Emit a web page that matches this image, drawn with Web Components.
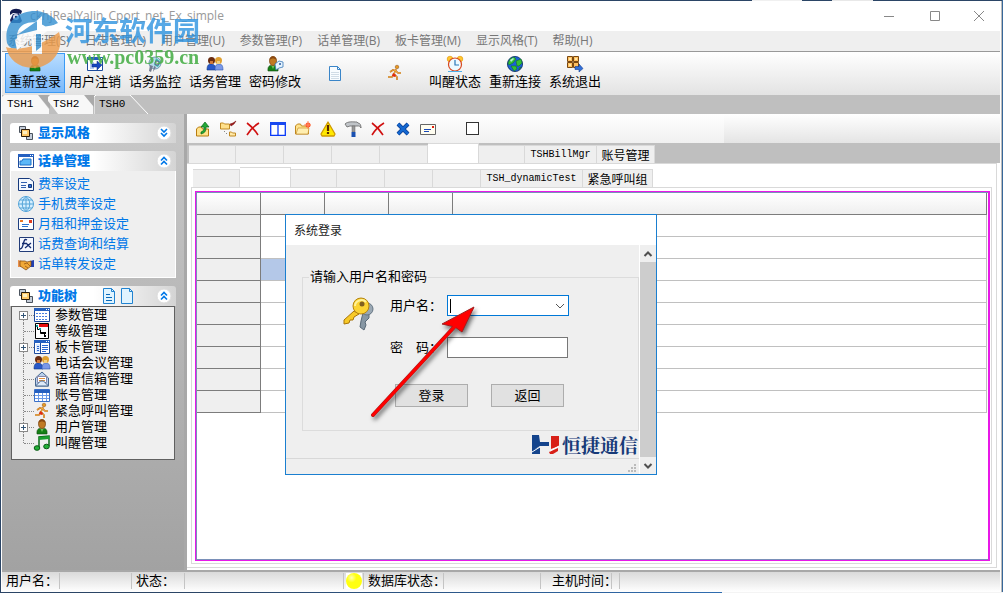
<!DOCTYPE html>
<html lang="zh-CN">
<head>
<meta charset="utf-8">
<title>ckhjRealYaJin_Cport_net_Ex_simple</title>
<style>
html, body { margin: 0; height: 100%; }
body { font: 13px/16px "Liberation Sans", "Noto Sans CJK SC", sans-serif; color: #000; background: #2b4566; overflow: hidden; }
</style>
</head>
<body>
<app-window></app-window>
<script>
const BASE = `*{box-sizing:border-box}
button{font:inherit;color:inherit;margin:0;padding:0;border:0;background:none;text-align:inherit;white-space:nowrap}
a{color:inherit;text-decoration:none}ul{list-style:none;margin:0;padding:0}`;

function define(name, css, html, setup) {
  const template = document.createElement('template');
  template.innerHTML = `<style>${BASE}${css}</style>${html}`;
  customElements.define(name, class extends HTMLElement {
    connectedCallback() {
      if (this.shadowRoot) return;
      this.attachShadow({ mode: 'open' }).append(template.content.cloneNode(true));
      if (setup) setup(this, this.shadowRoot);
    }
  });
}

const person = (c, x = 0) => `<g transform="translate(${x} 0)"><path d="M3 15c-.5-4 1-6 5-6s5.500 2 5 6z" fill="${c}" stroke="#134a10" stroke-width=".6"/><path d="M6 9l2 4 2-4z" fill="#6fc060"/><path d="M4.500 5c0-6 7-6 7 0 0 6-7 6-7 0z" fill="#c07a24" stroke="#7a4210" stroke-width=".7"/><path d="M4.500 4c0-5 7-5 7 0-2-2-5-2-7 0z" fill="#8a4a12"/></g>`;
const duo = `<path d="M0 14c0-4 1-6 4-6s5 2 5 6z" fill="#2858c8" stroke="#123a80" stroke-width=".6"/><circle cx="4.500" cy="4.500" r="3.500" fill="#6a2c10"/><path d="M3 5h3v3H3z" fill="#d07a3a"/><path d="M8 14c0-4 1-6 4-6s4 2 4 6z" fill="#7a98e8" stroke="#2b55b0" stroke-width=".6"/><circle cx="11.500" cy="4.500" r="3.500" fill="#e0a030"/><path d="M10 5h3v3h-3z" fill="#f0cf80"/>`;
const runner = `<circle cx="10" cy="2" r="1.800" fill="#e89a20" stroke="#8a4a10" stroke-width=".5"/><path d="M9 4L7 9l3 3v3M7 9l-2 3H1M3 7l3-2 3 1 2 2h3" fill="none" stroke="#b86410" stroke-width="1.600"/><path d="M9 4L7 9l3 3v3M7 9l-2 3H1M3 7l3-2 3 1 2 2h3" fill="none" stroke="#ffc04a" stroke-width=".7"/><path d="M6 8l3 2-1 2-3-1z" fill="#e02a10"/>`;
const frame = `<path d="M.5 1.500h15v13H.5z" fill="#fff" stroke="#1c4a9c"/><path d="M0 1h16v3H0z" fill="#2560c0"/><path d="M12 2h1v1h-1zm2 0h1v1h-1z" fill="#fff"/>`;
const cross = (c, w) => `<path d="M3 3l10 10M13 3L3 13" stroke="${c}" stroke-width="${w}" fill="none"/>`;
const ICONS = {
  phone: `<path d="M2 4C4 0 11 0 14 3l-1 3-3-1-5 0-3 2z" fill="#141c50"/><path d="M5 6l6-1 3 8-2 2H3L2 12z" fill="#1d2a66"/><circle cx="8" cy="9" r="3" fill="#d8def0"/><circle cx="8" cy="9" r="1.200" fill="#1d2a66"/>`,
  user: person('#158015'),
  logout: `${frame}<path d="M3 6h4v7H3z" fill="#b8ccf4"/><path d="M5 8h5V5l5 4-5 5v-3H5z" fill="#1747c0" stroke="#0a2a80" stroke-width=".5"/>`,
  monitor: `<circle cx="8" cy="7" r="6" fill="#b9dced" stroke="#7298b0"/><path d="M9 2l5 4-3 5-4-2z" fill="#40b5b0"/><circle cx="10" cy="7" r="2" fill="#f5fbff" stroke="#557"/><path d="M3 9l3 1-2 6-2-1zM7 10l2 1-3 5z" fill="#747c90"/>`,
  duo,
  pass: person('#158015', -2) + `<path d="M8 8l4-3 4 1v5l-4 1-3 2z" fill="#e5f4ff" stroke="#3a78b8" stroke-width=".8"/><circle cx="13" cy="8" r="1" fill="#29569a"/>`,
  page: `<path d="M2.500 1.500h8l3 3v11h-11z" fill="#f8fcff" stroke="#3a85c8"/><path d="M10.500 1.500v3h3" fill="none" stroke="#3a85c8"/><path d="M4 7.500h8M4 9.500h8M4 11.500h8M4 13.500h8" stroke="#d0dce6"/>`,
  pagelines: `<path d="M2.500.5h8l3 3v12h-11z" fill="#e0f4ff" stroke="#2183d0"/><path d="M10.500.5v3h3" fill="none" stroke="#2183d0"/><path d="M5 6.500h4M5 9.500h6M5 12.500h6" stroke="#0868b8"/>`,
  blank: `<path d="M2.500.5h8l3 3v12h-11z" fill="#e0f4ff" stroke="#2183d0"/><path d="M10.500.5v3h3" fill="none" stroke="#2183d0"/>`,
  runner,
  clock: `<circle cx="3" cy="3" r="2.800" fill="#ffc830" stroke="#e09000" stroke-width=".6"/><circle cx="13" cy="3" r="2.800" fill="#ffc830" stroke="#e09000" stroke-width=".6"/><circle cx="8" cy="8.500" r="6.500" fill="#eefaff" stroke="#d84820" stroke-width="1.200"/><path d="M8 4v5h4" fill="none" stroke="#2878b8" stroke-width="1.200"/><path d="M1 15.500h14" stroke="#50b0e8"/>`,
  globe: `<circle cx="8" cy="8" r="7.600" fill="#1c60d8" stroke="#082a60" stroke-width=".8"/><path d="M3 3l4-2 2 2-3 4-4 2-1-2zM9 5l5-2 1 4-3 3-2 0zM4 10l5 0 1 3-3 2zM12 12l2-1-2 3z" fill="#35c035" stroke="#0a6818" stroke-width=".5"/><path d="M3 4l3-2 1 1-3 3z" fill="#b0f0d0"/>`,
  exit: `<path d="M.5.5h5v5h-5zM6.500.5h5v5h-5zM.5 6.500h5v5h-5zM6.500 6.500h5v5h-5z" fill="#ffc060" stroke="#7a4810"/><path d="M2 2h2v2H2zM8 2h2v2H8zM2 8h2v2H2z" fill="#ffe8a8"/><path d="M8 10.500h4V8l4 4.500-4 3.500v-2.500H8z" fill="#3270d8" stroke="#123c90" stroke-width=".6"/>`,
  stack: `<path d="M1.500 1.500h6v6h-6z" fill="#c4ccd8" stroke="#4b535e"/><path d="M8.500 8.500h6v6h-6z" fill="#c4ccd8" stroke="#4b535e"/><path d="M3.500 4.500h8v7h-8z" fill="#ffc868" stroke="#2a1a08"/><path d="M5 6h4v3H5z" fill="#fff0c0"/>`,
  win: `${frame}<path d="M2 12V8h2l1-2h8v6z" fill="#5cb8f8" stroke="#1c70c8"/>`,
  rate: `<path d="M.5 2.500h11l4 3v9H.5z" fill="#f4f9ff" stroke="#16397c"/><path d="M3 6.500h6M3 9.500h5M3 11.500h5" stroke="#3060b0"/><path d="M10.500 8.500h3v3h-3z" fill="#2a70d8" stroke="#16397c"/>`,
  web: `<circle cx="8" cy="8" r="7.500" fill="#d6efff" stroke="#54a4d8"/><path d="M8 .5v15M.5 8h15M2 4h12M2 12h12M8 .5c-5 4-5 11 0 15M8 .5c5 4 5 11 0 15" fill="none" stroke="#54a4d8"/>`,
  card: `<path d="M.5 2.500h15v11H.5z" fill="#fff" stroke="#1e3f80"/><path d="M2 4h3v2H2z" fill="#e87828"/><path d="M11 4h3v3h-3z" fill="#e03c20"/><path d="M4 8.500h7M4 10.500h6" stroke="#2b75d0"/>`,
  fx: `<path d="M1.500 1.500h14v14h-14z" fill="#f4f7ff" stroke="#223c78"/><path d="M9 4c-3-2-3 2-4 5s-1 4-3 4M4 7.500h4M8 7l5 5M13 7l-6 5" fill="none" stroke="#142c70" stroke-width="1.300"/>`,
  hands: `<path d="M0 4l4 1v6l-4 0z" fill="#e8904a"/><path d="M16 4l-4 1v6l4 0z" fill="#2140b0"/><path d="M2 5l5 0 2 1 4-1v5l-5 4-6-4z" fill="#f0a838" stroke="#7a4210" stroke-width=".7"/><path d="M6 8l3-1 3 3M7 10l3 2" fill="none" stroke="#8a4a10" stroke-width=".7"/>`,
  cal: `${frame}<path d="M2 6.500h12M2 9.500h12M2 12.500h12" stroke="#4a7fe0" stroke-dasharray="2 1"/>`,
  chart: `<path d="M1.500.5h13v15h-13z" fill="#fff" stroke="#000"/><path d="M5 1h9v3H5z" fill="#e81010"/><path d="M3.500 3v3.500h3v4h4v3M6.500 9.500h4" fill="none" stroke="#000"/><path d="M2 2h2v2H2zM5 5h2v2H5z" fill="#10a0a0"/><path d="M10 9h2v2h-2zM10 12h2v2h-2z" fill="#000"/>`,
  board: `${frame}<path d="M2 5h4v8H2z" fill="#d9e8ff"/><path d="M6.500 4v10" stroke="#1c4a9c"/><path d="M8 6.500h6M8 8.500h6M8 10.500h6M8 12.500h4M3 7.500h2M3 9.500h2M3 11.500h2" stroke="#2a66d0"/>`,
  mail: `<path d="M1.500 7l6.500-6 6.500 6v8h-13z" fill="#b9d0ec" stroke="#486890"/><path d="M3.500 5.500h9v6h-9z" fill="#fff" stroke="#88a"/><path d="M5 7.500h6M5 9.500h6" stroke="#e09040"/><path d="M1.500 15l5-5h3l5 5z" fill="#dce9f8" stroke="#486890"/>`,
  table: `<path d="M.5 2.500h15v12H.5z" fill="#fff" stroke="#3a70c8"/><path d="M1 3h15v3H1z" fill="#2560c0"/><path d="M4.500 6v8M8.500 6v8M12.500 6v8M1 8.500h14M1 11.500h14" stroke="#6a9ae8"/>`,
  music: `<path d="M5 13V2l10-1v10" fill="none" stroke="#0a6a18" stroke-width="1.500"/><path d="M5 2l10-1v3L5 5z" fill="#1ca030"/><ellipse cx="3" cy="13" rx="2.800" ry="2.300" fill="#22b038" stroke="#0a5a14"/><ellipse cx="12.500" cy="11.500" rx="2.800" ry="2.300" fill="#22b038" stroke="#0a5a14"/>`,
  up: `<path d="M1.500 15V8l2-2h3l1 2h6v7z" fill="#ffe28a" stroke="#b87c10"/><path d="M6 11c3-1 3-3 3-5H6l4-5 4 5h-3c0 4-1 6-5 7z" fill="#22a838" stroke="#0a6818" stroke-width=".7"/>`,
  move: `<path d="M.5 8V2h3l1 1h5v5z" fill="#ffe08a" stroke="#c08820"/><path d="M10 3l3-1 3-2-2 3-3 2z" fill="#a01818" stroke="#700808" stroke-width=".5"/><path d="M9.500 15v-4h2l1 1h3v3z" fill="#ffe9a8" stroke="#c08820"/><path d="M4 10h1v1H4zM6 12h1v1H6z" fill="#888"/>`,
  del: `<path d="M2 2c4 3 8 7 11 12M14 2C9 5 5 9 2 14" fill="none" stroke="#d01010" stroke-width="1.600"/>`,
  cols: `<path d="M.7 1.700h14.600v12.600H.7zM8 3v11" fill="#fff" stroke="#0838f8" stroke-width="1.300"/><path d="M0 1h16v3H0z" fill="#1848f0"/>`,
  newfolder: `<path d="M.5 13V5l2-2h3l1 2h7v8z" fill="#ffe38c" stroke="#c08820"/><path d="M1 13l2-6h11l-1 6z" fill="#ffeeb0" stroke="#c08820" stroke-width=".6"/><circle cx="13" cy="4" r="2.500" fill="#ff5028"/><path d="M13 0v8M9 4h7" stroke="#ff8a60"/>`,
  warn: `<path d="M8 1l7 12-1 2H2l-1-2z" fill="#ffe800" stroke="#d09a00" stroke-width="1.300" stroke-linejoin="round"/><path d="M8 4v6M8 11v2" stroke="#5a2800" stroke-width="2.200"/>`,
  hammer: `<path d="M0 3c3-3 8-2 12-2l1 1c2 0 3 2 3 5-1-2-2-2-3-2H5L2 6z" fill="#c0c4c8" stroke="#666" stroke-width=".8"/><path d="M7 5h3v6H7z" fill="#999" stroke="#666" stroke-width=".5"/><path d="M6.500 11h4v5h-4z" fill="#1a50b0"/>`,
  bluex: cross('#0a3c90', 4) + cross('#1468d0', 2.5),
  letter: `<path d="M.5 3.500h15v10H.5z" fill="#fffdf0" stroke="#666"/><path d="M12 5h2v2h-2z" fill="#e02010"/><path d="M4 8.500h7M4 10.500h5" stroke="#1848b8"/>`,
  down2: `<circle cx="8" cy="8" r="7" fill="#fff" stroke="#ddd"/><path d="M5 4l3 3 3-3M5 8l3 3 3-3" fill="none" stroke="#0078e8" stroke-width="1.600"/>`,
  up2: `<circle cx="8" cy="8" r="7" fill="#fff" stroke="#ddd"/><path d="M5 7.500l3-3 3 3M5 11.500l3-3 3 3" fill="none" stroke="#0078e8" stroke-width="1.600"/>`,
  ball: `<defs><radialGradient id="g" cx=".35" cy=".3"><stop offset="0" stop-color="#ffffb0"/><stop offset=".6" stop-color="#ffff10"/></radialGradient></defs><path d="M0 0h16v16H0z" fill="#fff"/><circle cx="8" cy="8" r="8" fill="url(#g)"/>`,
  min: `<path d="M3 8.500h10" stroke="#888"/>`,
  max: `<path d="M3.500 3.500h9v9h-9z" fill="none" stroke="#888"/>`,
  close: `<path d="M3 3l10 10M13 3L3 13" stroke="#888"/>`,
  caretup: `<path d="M4.500 10L8 6.500l3.500 3.500" fill="none" stroke="#505050" stroke-width="2"/>`,
  caretdown: `<path d="M4.500 6L8 9.500 11.500 6" fill="none" stroke="#505050" stroke-width="2"/>`,
  chevron: `<path d="M4 6l4 4 4-4" fill="none" stroke="#555"/>`,
  grip: `<path d="M11 5h2v2h-2zM8 8h2v2H8zM11 8h2v2h-2zM5 11h2v2H5zM8 11h2v2H8zM11 11h2v2h-2z" fill="#bbb"/>`
};

define('ui-icon', `:host{display:block;flex:none;width:16px;height:16px}svg{display:block;width:100%;height:100%;overflow:visible}`,
  `<svg viewBox="0 0 16 16" aria-hidden="true"></svg>`,
  (el, root) => { root.querySelector('svg').innerHTML = ICONS[el.getAttribute('name')] || ''; });

define('title-bar', `:host{display:flex;align-items:center;height:30px;background:#fff;color:#999;font:12px/16px "Open Sans",sans-serif}
ui-icon{margin:0 6px}.name{flex:1}button{width:46px;height:30px;display:grid;place-items:center}button:last-child{width:42px}button ui-icon{margin:0}`,
  `<ui-icon name="phone"></ui-icon><span class="name">ckhjRealYaJin_Cport_net_Ex_simple</span>
  <button aria-label="最小化"><ui-icon name="min"></ui-icon></button><button aria-label="最大化"><ui-icon name="max"></ui-icon></button><button aria-label="关闭"><ui-icon name="close"></ui-icon></button>`);

define('menu-bar', `:host{display:flex;height:21px;padding-left:6px;gap:15px;background:#efefef;border-bottom:1px solid #999;color:#777;font:12px/20px "Open Sans","Noto Sans CJK SC",sans-serif}`,
  ['系统管理(S)','日志管理(L)','用户管理(U)','参数管理(P)','话单管理(B)','板卡管理(M)','显示风格(T)','帮助(H)'].map(t => `<button>${t}</button>`).join(''));

define('tool-button', `:host{display:block;width:60px}button{width:100%;height:40px;display:flex;flex-direction:column;align-items:center;justify-content:center;gap:2px;border:1px solid transparent}
:host([active]) button{background:linear-gradient(#b8dcff,#7ab9fa);border-color:#3a9af5}`,
  `<button><slot name="icon"></slot><slot></slot></button>`,
  (el, root) => {
    const icon = document.createElement('ui-icon');
    icon.slot = 'icon';
    icon.setAttribute('name', el.getAttribute('icon'));
    el.append(icon);
    if (el.title) root.querySelector('button').setAttribute('aria-label', el.title);
  });

define('tool-bar', `:host{display:flex;height:43px;padding:1px 3px;background:linear-gradient(#fff,#e3e3e3)}`,
  `<tool-button icon="user" active>重新登录</tool-button><tool-button icon="logout">用户注销</tool-button><tool-button icon="monitor">话务监控</tool-button><tool-button icon="duo">话务管理</tool-button><tool-button icon="pass">密码修改</tool-button><tool-button icon="page" title="新建"></tool-button><tool-button icon="runner" title="紧急"></tool-button><tool-button icon="clock">叫醒状态</tool-button><tool-button icon="globe">重新连接</tool-button><tool-button icon="exit">系统退出</tool-button>`);

define('document-tabs', `:host{display:flex;height:19px;background:#bfbfbf;font:11px/19px "Liberation Mono",monospace}
button{position:relative;width:46px;padding-left:5px}svg{position:absolute;left:0;top:0}span{position:relative}`,
  `<button><svg width="48" height="19"><path d="M36 0h12v14z" fill="#aaa"/><path d="M0 19V2l2-2h34l11 14v5z" fill="#f8f8f8"/></svg><span>TSH1</span></button>
   <button><svg width="48" height="19"><path d="M36 0h10v12z" fill="#aaa"/><path d="M0 6V2l2-2h34l9 11v8H10z" fill="#f8f8f8"/></svg><span>TSH2</span></button>
   <button><svg width="56" height="19"><path d="M0 19V2l2-2h34l18 19" fill="#c0c0c0" stroke="#fff"/></svg><span>TSH0</span></button>`);

define('side-panel', `:host{display:block}header{display:flex;align-items:center;height:20px;padding:0 4px 0 8px;border-radius:3px 3px 0 0;background:linear-gradient(90deg,#fff 50%,#d4d4d4);color:#0078e8;font-weight:bold}
b{margin:0 24px 0 4px}.x{display:flex;flex:1}`,
  `<header><b></b><div class="x"><slot name="tools"></slot></div><button aria-label="展开或收起"></button></header><slot></slot>`,
  (el, root) => {
    root.querySelector('b').textContent = el.getAttribute('heading');
    root.querySelector('header').insertAdjacentHTML('afterbegin', `<ui-icon name="${el.getAttribute('icon')}"></ui-icon>`);
    root.querySelector('button').innerHTML = `<ui-icon name="${el.hasAttribute('collapsed') ? 'down2' : 'up2'}"></ui-icon>`;
  });

define('task-list', `:host{display:block;background:#efefef;border:1px solid #fff;border-top:0;padding:3px 7px;color:#0078e8}a{display:flex;align-items:center;gap:4px;height:20px}`,
  `<ul>${[['rate','费率设定'],['web','手机费率设定'],['card','月租和押金设定'],['fx','话费查询和结算'],['hands','话单转发设定']].map(([i,t]) => `<li><a href="#"><ui-icon name="${i}"></ui-icon>${t}</a></li>`).join('')}</ul>`);

define('function-tree', `:host{display:block;margin:0 1px;background:#efefef;border:1px solid #606060;padding-bottom:8px}
li{position:relative}a{display:flex;align-items:center;height:16px;gap:5px;padding-left:22px}
li::before{content:"";position:absolute;left:11px;top:0;height:16px;border-left:1px dotted #888}li:first-child::before{top:8px;height:8px}li:last-child::before{height:8px}
li::after{content:"";position:absolute;left:12px;top:8px;width:10px;border-top:1px dotted #888}
.p{position:absolute;z-index:1;left:7px;top:4px;width:9px;height:9px;border:1px solid #888;background:linear-gradient(#357,#357) center/5px 1px no-repeat,linear-gradient(#357,#357) center/1px 5px no-repeat,#fff}`,
  `<ul>${[['cal','参数管理',1],['chart','等级管理'],['board','板卡管理',1],['duo','电话会议管理'],['mail','语音信箱管理'],['table','账号管理'],['runner','紧急呼叫管理'],['user','用户管理',1],['music','叫醒管理']].map(([i,t,p]) => `<li>${p ? `<button class="p" aria-label="展开${t}"></button>` : ''}<a href="#"><ui-icon name="${i}"></ui-icon>${t}</a></li>`).join('')}</ul>`);

define('side-bar', `:host{display:flex;flex-direction:column;gap:8px;flex:none;width:185px;padding:9px 8px 0 8px;border-right:3px solid #a8a8a8;background:linear-gradient(#c9c9c9,#a2a2a2);box-sizing:border-box}span{display:flex;gap:2px}`,
  `<side-panel icon="stack" heading="显示风格" collapsed></side-panel>
   <side-panel icon="win" heading="话单管理"><task-list></task-list></side-panel>
   <side-panel icon="stack" heading="功能树"><span slot="tools"><ui-icon name="pagelines"></ui-icon><ui-icon name="blank"></ui-icon></span><function-tree></function-tree></side-panel>`);

define('icon-bar', `:host{display:flex;height:29px;background:linear-gradient(#fff,#e4e4e4)}
div{display:flex;align-items:center;gap:9px;width:537px;padding-left:8px;background:linear-gradient(#fff,#f0f0f0)}
input{appearance:none;width:13px;height:13px;margin:0 0 0 21px;border:1px solid #333;background:#fff}`,
  `<div>${[['up','上移'],['move','移动'],['del','删除'],['cols','分栏'],['newfolder','新建文件夹'],['warn','告警'],['hammer','工具'],['del','清除'],['bluex','关闭'],['letter','邮件']].map(([i,t]) => `<button aria-label="${t}"><ui-icon name="${i}"></ui-icon></button>`).join('')}<input type="checkbox" aria-label="选择"></div>`);

const TAB_CSS = `button{flex:none;height:18px;border:1px solid #d9d9d9;border-width:1px 1px 0 0;background:#efefef;text-align:center;font:12px/16px "Noto Sans CJK SC",sans-serif}
button:first-child{border-left-width:1px}.on{height:20px;background:#fff}.mono{font:10px/16px "Liberation Mono",monospace}
.s{width:46px}.t{width:47px}.m{width:48px}.l{width:51px}`;
define('outer-tabs', `:host{display:flex;align-items:flex-end;height:20px;padding-left:2px;background:#bfbfbf}${TAB_CSS}.a{width:72px}.b{width:58px}`,
  `<button class="t" aria-label="1"></button><button class="m" aria-label="2"></button><button class="m" aria-label="3"></button><button class="m" aria-label="4"></button><button class="m" aria-label="5"></button><button class="l on" aria-label="6"></button><button class="s" aria-label="7"></button><button class="mono a">TSHBillMgr</button><button class="b">账号管理</button>`);
define('inner-tabs', `:host{display:flex;align-items:flex-end;height:23px;padding-left:6px;background:#fff}${TAB_CSS}.a{width:102px}.b{width:70px}`,
  `<button class="t" aria-label="1"></button><button class="l on" aria-label="2"></button><button class="s" aria-label="3"></button><button class="m" aria-label="4"></button><button class="m" aria-label="5"></button><button class="m" aria-label="6"></button><button class="mono a">TSH_dynamicTest</button><button class="b">紧急呼叫组</button>`);

define('data-grid', `:host{display:block;flex:1;border:1px solid #e818e8;border-right-width:2px;background:#fff;outline:0}
.in{height:100%;border:1px solid #7a90b8;border-right:0;padding-right:1px}
table{width:100%;table-layout:fixed;border-collapse:separate;border-spacing:0}
th,td{height:22px;padding:0;border-right:1px solid #c0c0c0;border-bottom:1px solid #c0c0c0}
th{background:linear-gradient(#fff,#efefef);border-color:#7c7c7c}tbody th{background:#efefef}
.c{width:64px}.sel{background:#b4c8e8}`,
  `<div class="in"><table><colgroup><col class="c"><col class="c"><col class="c"><col class="c"><col></colgroup><thead><tr>${'<th scope="col"></th>'.repeat(5)}</tr></thead><tbody>${Array.from({length:9}, (_, r) => `<tr><th scope="row"></th><td${r === 2 ? ' class="sel"' : ''}></td><td></td><td></td><td></td></tr>`).join('')}</tbody></table></div>`);

define('login-dialog', `:host{display:flex;flex-direction:column;width:372px;height:261px;border:1px solid #1a7fd0;background:#efefef;box-sizing:border-box}
h2{margin:0;height:30px;padding-left:8px;background:#fff;color:#222;font:12px/30px "Noto Sans CJK SC",sans-serif}
.row{display:flex;flex:1;min-height:0}.body{flex:1;display:flex;flex-direction:column;border-right:1px solid #fff}
fieldset{margin:23px 0 0 16px;padding:0 0 0 38px;border:1px solid #dcdcdc;height:163px;min-width:0}
legend{padding:0 1px;margin-left:-32px;line-height:18px}
.form{display:grid;grid-template-columns:49px 57px 122px;row-gap:21px;align-items:center;margin-top:9px}
.key{width:38px;height:38px;grid-row:span 2;align-self:start}label{white-space:pre}
.combo{position:relative;height:21px;width:122px}.combo ui-icon{position:absolute;right:1px;top:3px;pointer-events:none}
select,input{display:block;appearance:none;width:122px;height:21px;margin:0;padding:0 18px 0 3px;border:1px solid #0078d7;border-radius:0;background:linear-gradient(#000,#000) 2px 3px/1px 14px no-repeat,#fff;font:inherit}
input{width:121px;border-color:#777;background:#fff}
.acts{display:flex;gap:23px;margin:26px 0 0 54px}.acts button{width:73px;height:23px;border:1px solid #adadad;background:#e1e1e1;text-align:center}
.brand{display:flex;justify-content:flex-end;align-items:center;gap:2px;height:27px;padding-right:1px;color:#173a78;font:bold 19px/26px "Noto Serif CJK SC","Noto Sans CJK SC",serif}
.brand svg{width:28px;height:20px}
footer{height:16px;border-top:1px solid #d8d8d8;display:flex;justify-content:flex-end}
.scroll{width:16px;display:flex;flex-direction:column}.thumb{flex:1;background:#cdcdcd}.scroll button{height:17px}`,
  `<h2>系统登录</h2><div class="row"><div class="body"><fieldset><legend>请输入用户名和密码</legend>
  <div class="form"><svg class="key" viewBox="0 0 38 38"><path d="M22 18l6-1 0 6-4 4 1 3-2 5-4-3 1-6z" fill="#8797a4" stroke="#596977"/><circle cx="26" cy="14" r="6" fill="#9aa8b4" stroke="#657583"/><path d="M13 16L3 25l0 4 5-1 1-3 3 0 1-3 5-3z" fill="#f7c928" stroke="#a87508"/><circle cx="20" cy="11" r="8" fill="#fbd333" stroke="#b58410"/><path d="M14 11c0-5 7-8 11-4" fill="none" stroke="#fff29a" stroke-width="2"/><circle cx="21" cy="9" r="2.500" fill="#806020"/></svg>
  <label for="u">用户名：</label><div class="combo"><select id="u"><option></option></select><ui-icon name="chevron"></ui-icon></div>
  <label for="p">密　码：</label><input id="p" type="password"></div>
  <div class="acts"><button>登录</button><button>返回</button></div></fieldset>
  <div class="brand"><svg viewBox="0 0 28 20"><path d="M0 0h7l1 7h9v4H8l-8 5z" fill="#14448c"/><path d="M0 19v-4l8-3v7z" fill="#14448c"/><path d="M19 1h8v10l-8 3z" fill="#d82018"/><path d="M17 17l9-4v3l-5 3h-3z" fill="#d82018"/><path d="M0 17l8-5M18 16l9-5" fill="none" stroke="#fff"/></svg><span>恒捷通信</span></div>
  <footer><ui-icon name="grip"></ui-icon></footer></div>
  <div class="scroll"><button aria-label="向上"><ui-icon name="caretup"></ui-icon></button><div class="thumb"></div><button aria-label="向下"><ui-icon name="caretdown"></ui-icon></button></div></div>`);

define('status-bar', `:host{display:flex;align-items:center;height:22px;padding-bottom:2px;border-top:2px solid #a8a8a8;background:linear-gradient(#dadada,#fff);white-space:nowrap;box-sizing:border-box}
div{display:flex;align-items:center;height:16px;border-right:1px solid #c4c4c4;padding-left:4px}.a{width:58px}.b{width:72px}.c{width:53px}.d{width:159px}.e{width:20px;padding-left:2px}.f{width:80px}.g{width:97px}.h{width:71px;padding-left:11px}.i{width:8px}`,
  `<div class="a">用户名：</div><div class="b"></div><div class="c">状态：</div><div class="d"></div><div class="e"><ui-icon name="ball"></ui-icon></div><div class="f">数据库状态：</div><div class="g"></div><div class="h">主机时间：</div><div class="i"></div>`);

define('site-mark', `:host{display:block;pointer-events:none;white-space:nowrap}svg{position:absolute;left:0;top:0;opacity:.8}
.n{position:absolute;left:60px;top:4px;font:bold 27px/32px "Noto Sans CJK SC",sans-serif;color:#2d93e0;opacity:.8}
.u{position:absolute;left:62px;top:36px;font:bold 20px/22px "Liberation Serif",serif;color:#4cb04c;opacity:.9}`,
  `<svg width="58" height="60" viewBox="0 0 58 60"><path d="M2 33C-2 12 14 0 32 1c9 1 17 6 21 12L42 18c-8-8-24-8-29 3-2 5-1 11 3 17C9 40 4 38 2 33z" fill="#338fd0"/><path d="M1 37c13 4 34 0 53-15 6 19-8 36-27 36C13 57 4 50 1 37z" fill="#ee9b48"/><path d="M10 30L37 6v11l13-2-13 10v19H27V28L12 40z" fill="#fff"/><path d="M12 25l20-14v9zM31 24h5v13l-5 4z" fill="#338fd0"/></svg><span class="n">河东软件园</span><span class="u">www.pc0359.cn</span>`);

define('app-window', `:host{display:flex;flex-direction:column;min-height:100vh;box-sizing:border-box;padding:1px 3px 1px 2px;position:relative;background:linear-gradient(90deg,transparent 75%,#f0f0f0 75% 80%,transparent 80% 83%,#e8e8e8 83% 87%,transparent 87%) top/100% 1px no-repeat,linear-gradient(90deg,#2b4566 20%,#2f6db0 72%,#f4f4f4 72%) bottom/100% 1px no-repeat,linear-gradient(#38689a,#38689a) right/1px 100% no-repeat,linear-gradient(90deg,#fff 1px,#bbb 1px) right 1px top 1px/2px 100% no-repeat,linear-gradient(90deg,#2b4566 1px,#fff 1px) left/2px 100% no-repeat,#2b4566}
.mid{display:flex;flex:1;min-height:0}main{position:relative;flex:1;min-width:0;display:flex;flex-direction:column;background:#fff}
.sheet{flex:1;display:flex;flex-direction:column;margin:0 3px 2px 0;border:solid #d9d9d9;border-width:1px 1px 1px 0}
.inner{flex:1;display:flex;margin:0 4px 3px 4px;padding:3px 1px 2px 3px;border:1px solid #d9d9d9}
login-dialog{position:absolute;left:98px;top:100px}arrow-mark{position:absolute;left:181px;top:186px}site-mark{position:absolute;left:5px;top:10px}`,
  `<title-bar></title-bar><menu-bar></menu-bar><tool-bar></tool-bar><document-tabs></document-tabs>
  <div class="mid"><side-bar></side-bar><main><icon-bar></icon-bar><outer-tabs></outer-tabs><div class="sheet"><inner-tabs></inner-tabs><div class="inner"><data-grid></data-grid></div></div>
  <login-dialog></login-dialog><arrow-mark></arrow-mark></main></div><status-bar></status-bar><site-mark></site-mark>`);

define('arrow-mark', `:host{display:block;pointer-events:none}svg{display:block;filter:drop-shadow(2px 3px 2px #0008)}`,
  `<svg width="112" height="120" viewBox="0 0 112 120"><path d="M5 115L88 25" stroke="#a02020" stroke-width="4" stroke-linecap="round"/><path d="M107 4L89 28l-7-7-11 2z" fill="none"/><path d="M106 8L92 31l-7-6-9 0z" fill="#f00"/><path d="M106 7L94 32l-7-5-13-3z" fill="#f00" stroke="#a02020"/><path d="M5 115L90 23" stroke="#f00" stroke-width="3" stroke-linecap="round"/></svg>`);
</script>
</body>
</html>
